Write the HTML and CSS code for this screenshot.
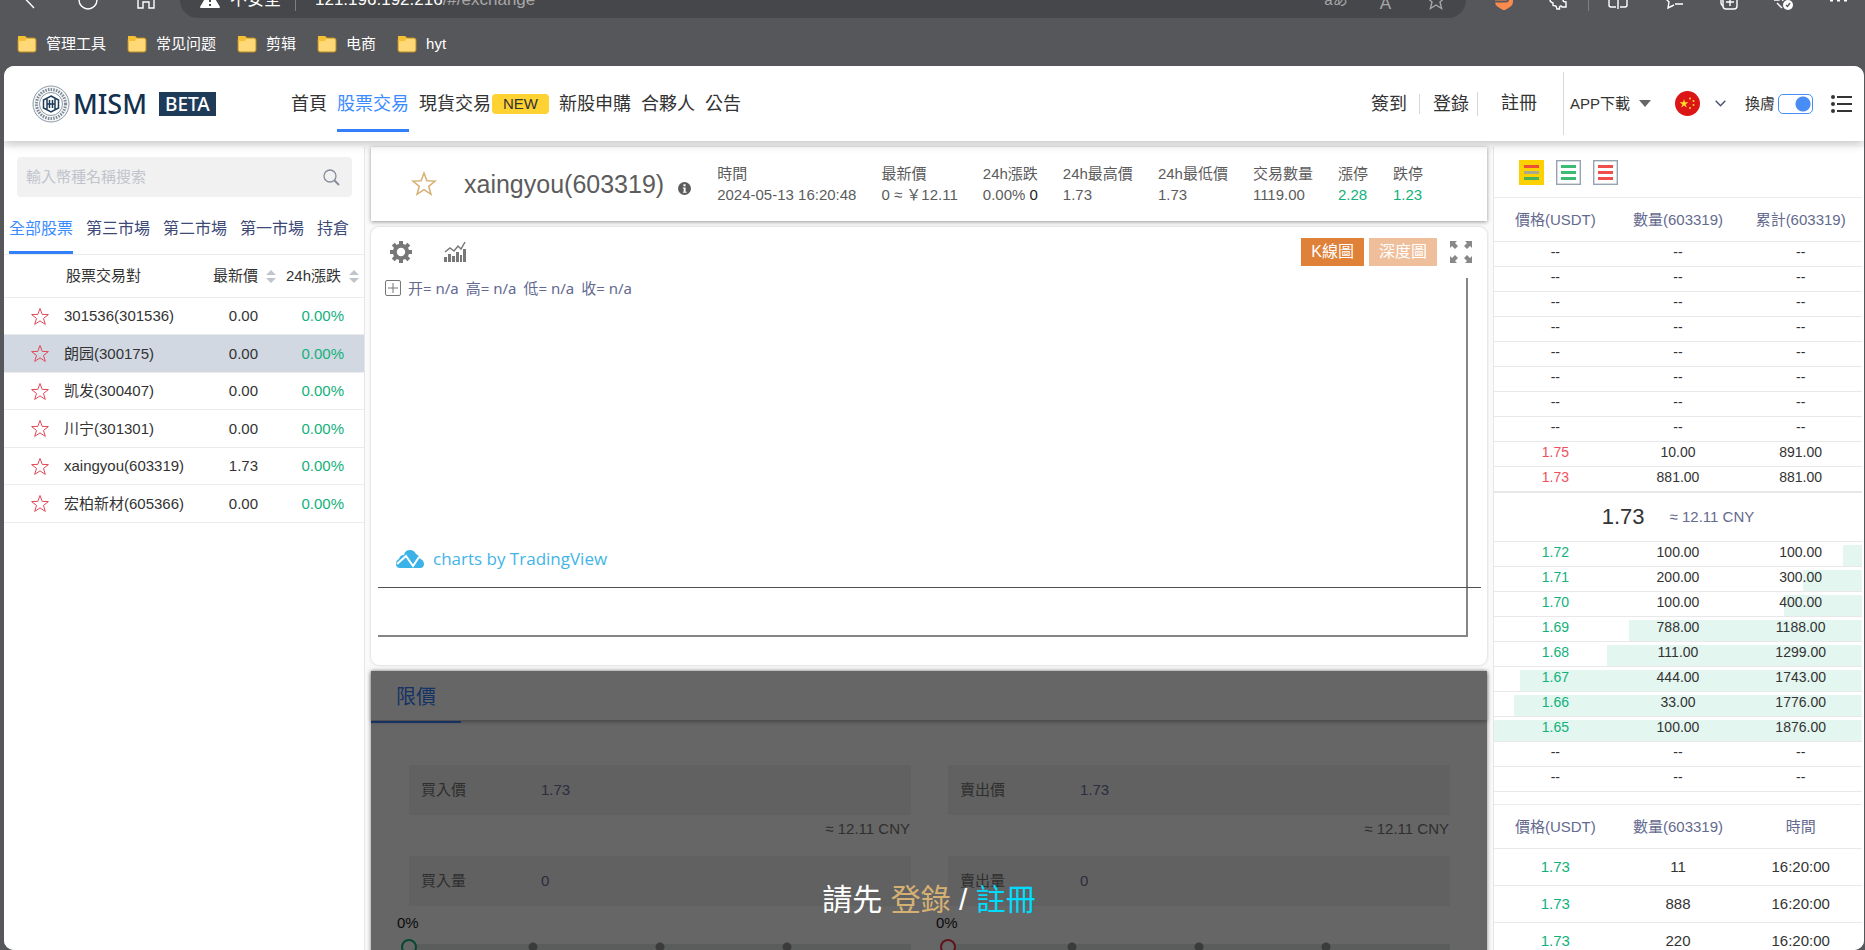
FILE: index.html
```html
<!DOCTYPE html>
<html lang="zh-Hant">
<head>
<meta charset="utf-8">
<title>MISM</title>
<link rel="stylesheet" href="styles.css">
</head>
<body>
<div class="browser">
  <div class="toolbar">
    <div class="nav-buttons">
      <button class="tool" aria-label="back"><svg width="20" height="20" viewBox="0 0 20 20"><path d="M5 8.500L14 18M14 1L5 9.500"/></svg></button>
      <button class="tool" aria-label="reload"><svg width="20" height="20" viewBox="0 0 20 20"><circle cx="10" cy="10" r="9"/></svg></button>
      <button class="tool" aria-label="home"><svg width="20" height="20" viewBox="0 0 20 20"><path d="M2 7v11h5v-6h6v6h5V7"/></svg></button>
    </div>
    <div class="address">
      <svg class="warn" width="20" height="20" viewBox="0 0 20 20"><path fill="#fff" stroke="none" d="M10 0l10 17q0 1-1 1H1q-1 0-1-1z"/><path stroke="#46474a" stroke-width="2" d="M10 6v6M10 14v2"/></svg>
      <span class="insecure">不安全</span>
      <span class="divider"></span>
      <span class="url">121.196.192.216<span class="path">/#/exchange</span></span>
      <div class="address-tools">
        <span class="translate">aあ</span><span>A<sup>⁾</sup></span>
        <svg width="20" height="20" viewBox="0 0 20 20"><path d="M10 1l2.600 6 6.400.6-5 4.300 1.600 6.600L10 15l-5.600 3.500L6 11.900 1 7.600 7.400 7z"/></svg>
      </div>
    </div>
    <div class="extensions">
      <svg width="20" height="20" viewBox="0 0 20 20"><path fill="#fa8a4e" stroke="none" d="M1 2h18v10q0 3-3 5l-5 3q-1 .5-2 0l-5-3q-3-2-3-5z"/><path stroke="#56575b" stroke-width="2" d="M0 11.500h12q2 0 2-2"/></svg>
      <svg width="20" height="20" viewBox="0 0 20 20"><path d="M3 3h4a3 3 0 0 1 6 0h4v4q-3 1-3 3t3 2v5h-4q-1-2-2.500 0v2H8l-1-3-3-.5V13q-3-1-3-3t2-3z"/></svg>
      <span class="divider"></span>
      <svg width="20" height="20" viewBox="0 0 20 20"><path d="M10 1v18M8 3H2q-1 0-1 1v11q0 2 2 2h5M12 3h6q1 0 1 1v11q0 2-2 2h-5"/></svg>
      <svg width="20" height="20" viewBox="0 0 20 20"><path d="M1 7l6-1 2-5M1 7l5 5-1 6 6-3M12 9h8M12 14h8"/></svg>
      <svg width="20" height="20" viewBox="0 0 20 20"><rect x="5" y="4" width="14" height="15" rx="3"/><path d="M12 7v9M8 12h8M3 4v9q0 2 2 3"/></svg>
      <svg width="20" height="20" viewBox="0 0 20 20"><path d="M1 10h5l2-3 2 4M4 13l5 5"/><circle cx="15" cy="15" r="5" fill="#fff" stroke="none"/><path stroke="#56575b" d="M13 15l1.500 1.500L17 13"/></svg>
      <svg width="20" height="20" viewBox="0 0 20 20"><path stroke-width="3" d="M2 10h3M9 10h3M16 10h3"/></svg>
    </div>
  </div>
  <nav class="bookmarks">
    <a href="#"><svg width="20" height="18" viewBox="0 0 20 18"><path fill="#d49a14" d="M1 1h7l2 3h9v3H1z"/><rect x="1" y="3" width="18" height="14" rx="2" fill="#ffd977" stroke="#b98b1c"/><path fill="#f5bf35" d="M1 1h7l2 2-2 3H1z"/></svg>管理工具</a>
    <a href="#"><svg width="20" height="18" viewBox="0 0 20 18"><path fill="#d49a14" d="M1 1h7l2 3h9v3H1z"/><rect x="1" y="3" width="18" height="14" rx="2" fill="#ffd977" stroke="#b98b1c"/><path fill="#f5bf35" d="M1 1h7l2 2-2 3H1z"/></svg>常见问题</a>
    <a href="#"><svg width="20" height="18" viewBox="0 0 20 18"><path fill="#d49a14" d="M1 1h7l2 3h9v3H1z"/><rect x="1" y="3" width="18" height="14" rx="2" fill="#ffd977" stroke="#b98b1c"/><path fill="#f5bf35" d="M1 1h7l2 2-2 3H1z"/></svg>剪辑</a>
    <a href="#"><svg width="20" height="18" viewBox="0 0 20 18"><path fill="#d49a14" d="M1 1h7l2 3h9v3H1z"/><rect x="1" y="3" width="18" height="14" rx="2" fill="#ffd977" stroke="#b98b1c"/><path fill="#f5bf35" d="M1 1h7l2 2-2 3H1z"/></svg>电商</a>
    <a href="#"><svg width="20" height="18" viewBox="0 0 20 18"><path fill="#d49a14" d="M1 1h7l2 3h9v3H1z"/><rect x="1" y="3" width="18" height="14" rx="2" fill="#ffd977" stroke="#b98b1c"/><path fill="#f5bf35" d="M1 1h7l2 2-2 3H1z"/></svg>hyt</a>
  </nav>
</div>

<div class="page">
  <header class="header">
    <a class="logo" href="#">
      <svg width="38" height="38" viewBox="0 0 38 38" fill="none"><circle cx="19" cy="19" r="18" fill="#f4f6f7" stroke="#8e9aa5"/><circle cx="19" cy="19" r="14.500" stroke="#7d8a97" stroke-width="3" stroke-dasharray="1.500 1.200"/><circle cx="19" cy="19" r="11.500" fill="#fff" stroke="#8e9aa5"/><path stroke="#1f3b5a" stroke-width="1.500" d="M19 11l7.500 4v8L19 27l-7.500-4v-8zM15 14v10M23 14v10M17.500 15v8M20.500 15v8M15 19h8"/></svg>
      <span class="brand">MISM</span><span class="beta">BETA</span>
    </a>
    <nav class="menu">
      <a href="#">首頁</a><a href="#" class="current">股票交易</a><span class="with-badge"><a href="#">現貨交易</a><span class="new">NEW</span></span><a href="#">新股申購</a><a href="#">合夥人</a><a href="#">公告</a>
    </nav>
    <div class="account">
      <a href="#" class="signin">簽到</a><a href="#" class="login">登錄</a><a href="#" class="register">註冊</a>
      <button class="app">APP下載<svg width="12" height="7" viewBox="0 0 12 7"><path fill="#666" d="M0 0h12L6 7z"/></svg></button>
      <button class="lang" aria-label="language"><svg width="25" height="25" viewBox="0 0 25 25"><circle cx="12.500" cy="12.500" r="12.500" fill="#dc1616"/><path fill="#ffda2c" d="M9 8l1 3.200h3.400l-2.700 2 1 3.300L9 14.500l-2.700 2 1-3.300-2.700-2H8z"/><circle cx="15" cy="7.500" r="1" fill="#ffda2c"/><circle cx="18.500" cy="10" r="1" fill="#ffda2c"/><circle cx="18.500" cy="14" r="1" fill="#ffda2c"/><circle cx="15" cy="17" r="1" fill="#ffda2c"/></svg><svg width="11" height="7" viewBox="0 0 11 7"><path fill="none" stroke="#4a5470" stroke-width="1.500" d="M.7.7l4.800 5 4.800-5"/></svg></button>
      <label class="skin">換膚<input type="checkbox" role="switch" checked></label>
      <button class="list" aria-label="orders"><svg width="21" height="20" viewBox="0 0 21 20"><g fill="#333"><circle cx="2" cy="3" r="2"/><circle cx="2" cy="10" r="2"/><circle cx="2" cy="17" r="2"/><path d="M6 2h15v2H6zM6 9h15v2H6zM6 16h15v2H6z"/></g></svg></button>
    </div>
  </header>

  <main class="workspace">
    <aside class="markets">
      <label class="search"><input type="text" placeholder="輸入幣種名稱搜索" aria-label="輸入幣種名稱搜索"><svg width="17" height="17" viewBox="0 0 17 17"><circle cx="7" cy="7" r="6" fill="none" stroke="#858b9b" stroke-width="1.300"/><path stroke="#858b9b" stroke-width="2" d="M11.500 11.500L16 16"/></svg></label>
      <nav class="boards"><a href="#" class="current">全部股票</a><a href="#">第三市場</a><a href="#">第二市場</a><a href="#">第一市場</a><a href="#">持倉</a></nav>
      <table class="stocks">
        <colgroup><col class="c-star"><col class="c-name"><col class="c-price"><col class="c-change"></colgroup>
        <thead><tr><th></th><th class="pair">股票交易對</th><th>最新價<svg width="10" height="13" viewBox="0 0 10 13"><path fill="#c0c4cc" d="M5 0l5 5H0zM5 13l5-5H0z"/></svg></th><th>24h漲跌<svg width="10" height="13" viewBox="0 0 10 13"><path fill="#c0c4cc" d="M5 0l5 5H0zM5 13l5-5H0z"/></svg></th></tr></thead>
        <tbody>
          <tr><td class="fav"><svg width="20" height="19" viewBox="0 0 20 19"><path d="M10 1.500l2.200 5.900 6.200.2-4.900 3.800 1.800 6-5.300-3.500-5.300 3.500 1.800-6L1.600 7.600l6.200-.2z"/></svg></td><td>301536(301536)</td><td>0.00</td><td class="up">0.00%</td></tr>
          <tr class="selected"><td class="fav"><svg width="20" height="19" viewBox="0 0 20 19"><path d="M10 1.500l2.200 5.900 6.200.2-4.900 3.800 1.800 6-5.300-3.500-5.300 3.500 1.800-6L1.600 7.600l6.200-.2z"/></svg></td><td>朗园(300175)</td><td>0.00</td><td class="up">0.00%</td></tr>
          <tr><td class="fav"><svg width="20" height="19" viewBox="0 0 20 19"><path d="M10 1.500l2.200 5.900 6.200.2-4.900 3.800 1.800 6-5.300-3.500-5.300 3.500 1.800-6L1.600 7.600l6.200-.2z"/></svg></td><td>凯发(300407)</td><td>0.00</td><td class="up">0.00%</td></tr>
          <tr><td class="fav"><svg width="20" height="19" viewBox="0 0 20 19"><path d="M10 1.500l2.200 5.900 6.200.2-4.900 3.800 1.800 6-5.300-3.500-5.300 3.500 1.800-6L1.600 7.600l6.200-.2z"/></svg></td><td>川宁(301301)</td><td>0.00</td><td class="up">0.00%</td></tr>
          <tr><td class="fav"><svg width="20" height="19" viewBox="0 0 20 19"><path d="M10 1.500l2.200 5.900 6.200.2-4.900 3.800 1.800 6-5.300-3.500-5.300 3.500 1.800-6L1.600 7.600l6.200-.2z"/></svg></td><td>xaingyou(603319)</td><td>1.73</td><td class="up">0.00%</td></tr>
          <tr><td class="fav"><svg width="20" height="19" viewBox="0 0 20 19"><path d="M10 1.500l2.200 5.900 6.200.2-4.900 3.800 1.800 6-5.300-3.500-5.300 3.500 1.800-6L1.600 7.600l6.200-.2z"/></svg></td><td>宏柏新材(605366)</td><td>0.00</td><td class="up">0.00%</td></tr>
        </tbody>
      </table>
    </aside>

    <div class="center">
      <section class="ticker">
        <svg class="ticker-star" width="26" height="26" viewBox="0 0 26 26"><path fill="none" stroke="#d5b074" stroke-width="1.500" d="M13 2l2.900 7.800 8.300.3-6.500 5.200 2.300 8L13 18.700l-7 4.600 2.300-8L1.800 10.100l8.300-.3z"/></svg>
        <h1>xaingyou(603319)</h1>
        <svg class="ticker-info" width="13" height="13" viewBox="0 0 12 12"><circle cx="6" cy="6" r="6" fill="#5c5c5c"/><path fill="#fff" d="M5 2h2v2H5zM4.500 5H7v4h1v1H4.500V9h.8V6h-.8z"/></svg>
        <dl class="stats">
          <div><dt>時間</dt><dd>2024-05-13 16:20:48</dd></div>
          <div><dt>最新價</dt><dd>0 ≈ ￥12.11</dd></div>
          <div><dt>24h漲跌</dt><dd>0.00% <span class="delta">0</span></dd></div>
          <div><dt>24h最高價</dt><dd>1.73</dd></div>
          <div><dt>24h最低價</dt><dd>1.73</dd></div>
          <div><dt>交易數量</dt><dd>1119.00</dd></div>
          <div><dt>漲停</dt><dd class="up">2.28</dd></div>
          <div><dt>跌停</dt><dd class="up">1.23</dd></div>
        </dl>
      </section>

      <section class="chart">
        <div class="chart-bar">
          <button aria-label="settings"><svg width="22" height="22" viewBox="0 0 22 22"><circle cx="11" cy="11" r="6.200" fill="none" stroke="#777" stroke-width="4"/><path stroke="#777" stroke-width="4" d="M11 0v4M11 18v4M0 11h4M18 11h4M3.200 3.200L6 6M16 16l2.800 2.800M3.200 18.800L6 16M16 6l2.800-2.800"/></svg></button>
          <button aria-label="indicators"><svg width="22" height="22" viewBox="0 0 22 22"><path fill="#777" d="M0 16h3v5H0zM4 13h3v8H4zM8 15h3v6H8zM12 11h3v10h-3zM16 14h2v7h-2zM19 8h3v13h-3z"/><path fill="none" stroke="#777" stroke-width="1.500" d="M1 11l5-4 4 3 4-5 3 3 4-7"/></svg></button>
          <div class="chart-modes"><button class="mode active">K線圖</button><button class="mode">深度圖</button>
          <button aria-label="fullscreen"><svg width="22" height="22" viewBox="0 0 22 22"><path fill="#888" d="M0 0h7L5 2l3 3-3 3-3-3-2 2zM22 0h-7l2 2-3 3 3 3 3-3 2 2zM0 22h7l-2-2 3-3-3-3-3 3-2-2zM22 22h-7l2-2-3-3 3-3 3 3 2-2z"/></svg></button></div>
        </div>
        <div class="plot">
          <div class="pane price-pane">
            <div class="legend"><svg width="16" height="16" viewBox="0 0 16 16"><rect x=".5" y=".5" width="15" height="15" rx="1.500" fill="none" stroke="#777"/><path stroke="#777" d="M8 3v10M3 8h10"/></svg><span>开= n/a</span><span>高= n/a</span><span>低= n/a</span><span>收= n/a</span></div>
            <a class="credit" href="#"><svg width="28" height="18" viewBox="0 0 28 18"><path fill="#3cb3e7" d="M4 18q-4 0-4-4 0-4 3-5Q4 5 8 5q1-5 6-5 4 0 6 4 3 1 3 4 5 2 5 6 0 4-4 4z"/><path fill="none" stroke="#fff" stroke-width="2" d="M1 14l9-8 7 10 6-9"/></svg>charts by TradingView</a>
          </div>
          <div class="pane-line"></div>
          <div class="pane volume-pane"></div>
        </div>
      </section>

      <section class="trade">
        <div class="order-tabs"><button class="order-tab">限價</button></div>
        <div class="forms">
          <form class="buy">
            <label class="field"><span>買入價</span><input type="text" value="1.73"></label>
            <p class="approx">≈ 12.11 CNY</p>
            <label class="field"><span>買入量</span><input type="text" value="0"></label>
            <label class="amount"><span>0%</span><input type="range" min="0" max="100" value="0"></label>
          </form>
          <form class="sell">
            <label class="field"><span>賣出價</span><input type="text" value="1.73"></label>
            <p class="approx">≈ 12.11 CNY</p>
            <label class="field"><span>賣出量</span><input type="text" value="0"></label>
            <label class="amount"><span>0%</span><input type="range" min="0" max="100" value="0"></label>
          </form>
        </div>
        <div class="mask"><p>請先 <a class="mask-login" href="#">登錄</a> / <a class="mask-register" href="#">註冊</a></p></div>
      </section>
    </div>

    <aside class="book">
      <div class="depth-modes">
        <button class="both" aria-label="all orders"><svg width="25" height="25" viewBox="0 0 25 25"><path fill="#fdd000" d="M0 0h25v25H0z"/><path fill="#ee4d3a" d="M5 5h15v3H5z"/><path fill="#a9a98c" d="M5 11h15v3H5z"/><path fill="#4bb158" d="M5 17h15v3H5z"/></svg></button>
        <button aria-label="buy orders"><svg width="25" height="25" viewBox="0 0 25 25"><rect x=".7" y=".7" width="23.600" height="23.600" fill="#fff" stroke="#96a4b2" stroke-width="1.400"/><path fill="#3dba73" d="M5 5h15v3H5zM5 11h15v3H5zM5 17h15v3H5z"/></svg></button>
        <button aria-label="sell orders"><svg width="25" height="25" viewBox="0 0 25 25"><rect x=".7" y=".7" width="23.600" height="23.600" fill="#fff" stroke="#96a4b2" stroke-width="1.400"/><path fill="#f04d4d" d="M5 5h15v3H5zM5 11h15v3H5zM5 17h15v3H5z"/></svg></button>
      </div>
      <table class="orders asks">
        <thead><tr><th>價格(USDT)</th><th>數量(603319)</th><th>累計(603319)</th></tr></thead>
        <tbody>
          <tr><td>--</td><td>--</td><td>--</td></tr>
          <tr><td>--</td><td>--</td><td>--</td></tr>
          <tr><td>--</td><td>--</td><td>--</td></tr>
          <tr><td>--</td><td>--</td><td>--</td></tr>
          <tr><td>--</td><td>--</td><td>--</td></tr>
          <tr><td>--</td><td>--</td><td>--</td></tr>
          <tr><td>--</td><td>--</td><td>--</td></tr>
          <tr><td>--</td><td>--</td><td>--</td></tr>
          <tr><td class="down">1.75</td><td>10.00</td><td>891.00</td></tr>
          <tr><td class="down">1.73</td><td>881.00</td><td>881.00</td></tr>
        </tbody>
      </table>
      <div class="last"><strong>1.73</strong><span>≈ 12.11 CNY</span></div>
      <table class="orders bids">
        <tbody>
          <tr style="--depth:5.3%"><td class="up">1.72</td><td>100.00</td><td>100.00</td></tr>
          <tr style="--depth:16%"><td class="up">1.71</td><td>200.00</td><td>300.00</td></tr>
          <tr style="--depth:21.3%"><td class="up">1.70</td><td>100.00</td><td>400.00</td></tr>
          <tr style="--depth:63.3%"><td class="up">1.69</td><td>788.00</td><td>1188.00</td></tr>
          <tr style="--depth:69.2%"><td class="up">1.68</td><td>111.00</td><td>1299.00</td></tr>
          <tr style="--depth:92.9%"><td class="up">1.67</td><td>444.00</td><td>1743.00</td></tr>
          <tr style="--depth:94.7%"><td class="up">1.66</td><td>33.00</td><td>1776.00</td></tr>
          <tr style="--depth:100%"><td class="up">1.65</td><td>100.00</td><td>1876.00</td></tr>
          <tr><td>--</td><td>--</td><td>--</td></tr>
          <tr><td>--</td><td>--</td><td>--</td></tr>
        </tbody>
      </table>
      <table class="orders trades">
        <thead><tr><th>價格(USDT)</th><th>數量(603319)</th><th>時間</th></tr></thead>
        <tbody>
          <tr><td class="up">1.73</td><td>11</td><td>16:20:00</td></tr>
          <tr><td class="up">1.73</td><td>888</td><td>16:20:00</td></tr>
          <tr><td class="up">1.73</td><td>220</td><td>16:20:00</td></tr>
        </tbody>
      </table>
    </aside>
  </main>
</div>
</body>
</html>
```
FILE: styles.css
```css
* { box-sizing: border-box; }

body {
  margin: 0;
  height: 100vh;
  overflow: hidden;
  display: flex;
  flex-direction: column;
  background: #56575b;
  color: #333;
  font: 15px/20px "Liberation Sans", "Noto Sans CJK TC", sans-serif;
}

a { color: inherit; text-decoration: none; }
button { margin: 0; padding: 0; border: 0; background: none; color: inherit; font: inherit; }
svg { display: block; flex: none; }
input { font: inherit; }
table { width: 100%; border-collapse: separate; border-spacing: 0; table-layout: fixed; }
th { font-weight: normal; }
th, td { padding: 0; }
h1, p, dl, dd { margin: 0; }

.up { color: #11b17b; }
.down { color: #f0525d; }

/* Browser frame */
.browser { flex: none; height: 66px; overflow: hidden; color: #fff; }
.toolbar { display: flex; align-items: center; height: 36px; margin-top: -18px; }
.toolbar svg { fill: none; stroke: #fff; stroke-width: 1.4; }
.nav-buttons { display: flex; gap: 38px; width: 180px; padding-left: 20px; }
.address {
  flex: 1;
  display: flex;
  align-items: center;
  height: 36px;
  padding: 0 20px;
  border-radius: 18px;
  background: #46474a;
  font-size: 17px;
}
.divider { width: 1px; height: 22px; background: #7d7e82; }
.insecure { margin: 0 14px 0 10px; }
.url { margin-left: 19px; }
.path { color: #a6a7a9; }
.address-tools { display: flex; align-items: center; gap: 32px; margin-left: auto; color: #a6a7a9; }
.translate { font-size: 15px; }
.toolbar .address-tools svg { stroke: #a6a7a9; }
.extensions { display: flex; align-items: center; gap: 35px; width: 399px; padding-left: 28px; }
.extensions .divider { margin: 0 -16px; }
.bookmarks { display: flex; gap: 21px; padding: 16px 17px; }
.bookmarks a { display: flex; align-items: center; gap: 9px; }

/* Page header */
.page {
  flex: 1;
  min-height: 0;
  display: flex;
  flex-direction: column;
  overflow: hidden;
  margin: 0 1px 0 4px;
  border-radius: 10px;
  background: #fafafa;
}
.header {
  position: relative;
  z-index: 2;
  flex: none;
  display: flex;
  align-items: center;
  height: 75px;
  padding: 0 12px 0 28px;
  background: #fff;
  box-shadow: 0 2px 10px rgba(0, 0, 0, 0.24);
}
.logo { display: flex; align-items: center; width: 259px; color: #14304f; }
.brand { margin-left: 3px; width: 86px; font: 500 27px/30px "Noto Sans", sans-serif; }
.beta { padding: 0 6px; background: #1f3b5a; color: #fff; font: 500 19px/24px "Noto Sans", sans-serif; }
.menu { display: flex; gap: 10px; font-size: 18px; line-height: 24px; }
.menu a { padding: 16px 0 13px; border-bottom: 3px solid transparent; }
.menu .current { color: #3a8bff; border-color: #347ffb; }
.with-badge { display: flex; align-items: flex-start; gap: 1px; }
.new { margin-top: 18px; padding: 0 11px; border-radius: 4px; background: #fdd232; font-size: 15px; line-height: 20px; }
.account { display: flex; align-items: center; margin-left: auto; font-size: 18px; line-height: 24px; }
.signin { padding-right: 12px; border-right: 1px solid #d8d8d8; line-height: 20px; }
.login { padding: 0 8px 0 13px; border-right: 1px solid #d8d8d8; }
.register { padding: 0 26px 0 23px; border-right: 1px solid #d8d8d8; line-height: 63px; }
.app { display: flex; align-items: center; gap: 9px; margin-left: 6px; font-size: 15px; }
.lang { display: flex; align-items: center; gap: 15px; margin: 0 19px 0 24px; }
.skin { display: flex; align-items: center; gap: 3px; font-size: 15px; }
.skin input {
  appearance: none;
  width: 35px;
  height: 20px;
  margin: 0;
  border: 1px solid #488df5;
  border-radius: 5px;
  background: radial-gradient(circle at 24px 9px, #488df5 7px, transparent 8px);
}
.list { margin-left: 18px; }

/* Workspace */
.workspace {
  flex: 1;
  min-height: 0;
  display: grid;
  grid-template-columns: 361px minmax(0, 1fr) 371px;
  gap: 6px;
  padding-top: 6px;
}
.markets, .book { background: #fff; border: 1px solid #e6e6e6; border-width: 0 1px; }
.markets { border-left: 0; }
.book { border-right: 0; }

/* Market list */
.search {
  display: flex;
  align-items: center;
  height: 40px;
  margin: 10px 12px 0 13px;
  padding: 0 12px 0 9px;
  border-radius: 4px;
  background: #f1f1f1;
}
.search input { flex: 1; min-width: 0; padding: 0; border: 0; background: none; }
.search input::placeholder { color: #c0c4cc; }
.boards { display: flex; gap: 13px; padding: 0 5px; border-bottom: 1px solid #ebebeb; color: #3d4a78; font-size: 16px; }
.boards a { padding: 22px 0 12px; border-bottom: 3px solid transparent; }
.boards .current { color: #3a8bff; border-color: #347ffb; }
.c-star { width: 60px; }
.c-price { width: 64px; }
.c-change { width: 98px; }
.stocks th { height: 43px; border-bottom: 1px solid #ebebeb; text-align: right; white-space: nowrap; }
.stocks th svg { display: inline-block; vertical-align: middle; margin: 0 5px 2px 8px; }
.stocks th:nth-child(3) svg { margin: 0 -16px 2px 8px; }
.stocks .pair { padding-left: 2px; text-align: left; }
.stocks td { height: 37px; border-bottom: 1px solid #ebebeb; text-align: right; }
.stocks tr:nth-child(even) td { height: 38px; }
.stocks td:nth-child(2) { text-align: left; }
.stocks td:nth-child(3) { padding-right: 8px; }
.stocks td:nth-child(4) { padding-right: 20px; }
.stocks th:nth-child(3) { padding-right: 6px; }
.stocks .fav { padding-left: 26px; }
.fav path { fill: none; stroke: #e0485a; }
.selected { background: #d1d8e1; }

/* Ticker */
.center { display: flex; flex-direction: column; gap: 6px; min-width: 0; }
.ticker {
  flex: none;
  display: flex;
  align-items: center;
  height: 74px;
  padding-left: 40px;
  background: #fff;
  color: #5c5c5c;
  box-shadow: 0 1px 4px rgba(0, 0, 0, 0.4);
}
.ticker h1 { margin: 0 14px 0 27px; font-size: 25px; font-weight: normal; line-height: 30px; }
.ticker-info { margin: 8px 26px 0 0; }
.stats { display: flex; gap: 25px; line-height: 21px; white-space: nowrap; }
.delta { color: #222; }

/* Chart */
.chart { flex: none; padding: 11px 6px 28px 7px; border-radius: 8px; background: #fff; box-shadow: 0 0 3px rgba(0, 0, 0, 0.2); }
.chart-bar { display: flex; align-items: center; gap: 32px; padding: 0 9px 0 12px; }
.chart-modes { display: flex; align-items: center; gap: 5px; margin-left: auto; }
.chart-modes button:last-child { margin-left: 8px; }
.mode { padding: 0 10px; background: #efbf9b; color: #fff; font-size: 16px; line-height: 28px; }
.mode.active { background: #df8139; }
.plot { margin-top: 12px; }
.pane { margin-right: 13px; border-right: 2px solid #858585; }
.price-pane { display: flex; flex-direction: column; justify-content: space-between; height: 309px; padding: 0 7px 16px; }
.pane-line { height: 1px; background: #505050; }
.volume-pane { height: 49px; border-bottom: 2px solid #858585; }
.legend { display: flex; align-items: center; gap: 7px; color: #62688f; font: 15px/20px "Noto Sans", "Noto Sans CJK SC", sans-serif; }
.credit { display: flex; align-items: center; gap: 9px; padding-left: 11px; color: #42b4e6; font: 17px/24px "Open Sans", sans-serif; }

/* Trade panel */
.trade { position: relative; flex: none; min-height: 458px; background: #fff; box-shadow: 0 0 4px rgba(0, 0, 0, 0.5); }
.order-tabs { height: 49px; box-shadow: 0 2px 4px rgba(0, 0, 0, 0.3); }
.order-tab { width: 90px; height: 52px; padding-top: 2px; border-bottom: 2px solid #347ffb; color: #347ffb; font-size: 20px; }
.forms { display: grid; grid-template-columns: 1fr 1fr; gap: 37px; padding: 45px 37px 0 38px; }
.field { display: flex; align-items: center; height: 50px; padding: 0 12px; background: #f2f2f2; color: #777; }
.field span { width: 120px; }
.field input { flex: 1; min-width: 0; padding: 0; border: 0; background: none; color: #6c739c; }
.approx { padding: 4px 1px 17px 0; color: #777; text-align: right; }
.amount { display: block; margin: 7px -8px 0; color: #222; }
.amount span { display: block; margin-left: -4px; }
.amount input {
  appearance: none;
  display: block;
  width: 100%;
  height: 16px;
  margin: 6px 0 0;
  background:
    radial-gradient(circle, #949494 4px, transparent 5px) 25% 50% / 10px 10px no-repeat,
    radial-gradient(circle, #949494 4px, transparent 5px) 50% 50% / 10px 10px no-repeat,
    radial-gradient(circle, #949494 4px, transparent 5px) 75% 50% / 10px 10px no-repeat,
    linear-gradient(#e4e8e6, #e4e8e6) 50% 50% / calc(100% - 16px) 6px no-repeat;
}
.amount input::-webkit-slider-thumb {
  appearance: none;
  width: 16px;
  height: 16px;
  border: 2px solid #11b17b;
  border-radius: 50%;
  background: #fff;
}
.sell .amount input::-webkit-slider-thumb { border-color: #e8334a; }
.mask {
  position: absolute;
  inset: 0;
  display: flex;
  align-items: center;
  justify-content: center;
  background: rgba(0, 0, 0, 0.6);
  color: #fff;
  font-size: 30px;
  line-height: 40px;
}
.mask-login { color: #d5b074; }
.mask-register { color: #00dcff; }

/* Order book */
.book { padding-right: 2px; }
.depth-modes { display: flex; gap: 12px; padding: 13px 25px 12px; border-bottom: 1px solid #ebebeb; }
.orders td, .orders th { text-align: center; border-bottom: 1px solid #e8e8ea; }
.orders th { height: 44px; color: #646a8e; }
.orders td { height: 25px; font-size: 14px; line-height: 16px; vertical-align: top; padding-top: 2px; }
.last { display: flex; align-items: center; justify-content: center; gap: 25px; height: 50px; border: 1px solid #e8e8ea; border-width: 1px 0; }
.last strong { font-size: 22px; font-weight: normal; }
.last span { color: #646a8e; }
.bids tr {
  background: linear-gradient(#e4f6f0, #e4f6f0) right bottom / var(--depth, 0%) 22px no-repeat;
}
.trades { margin-top: 12px; border-top: 1px solid #ebebeb; }
.trades td { height: 37px; padding: 0; font-size: 15px; line-height: 20px; vertical-align: middle; }
```
